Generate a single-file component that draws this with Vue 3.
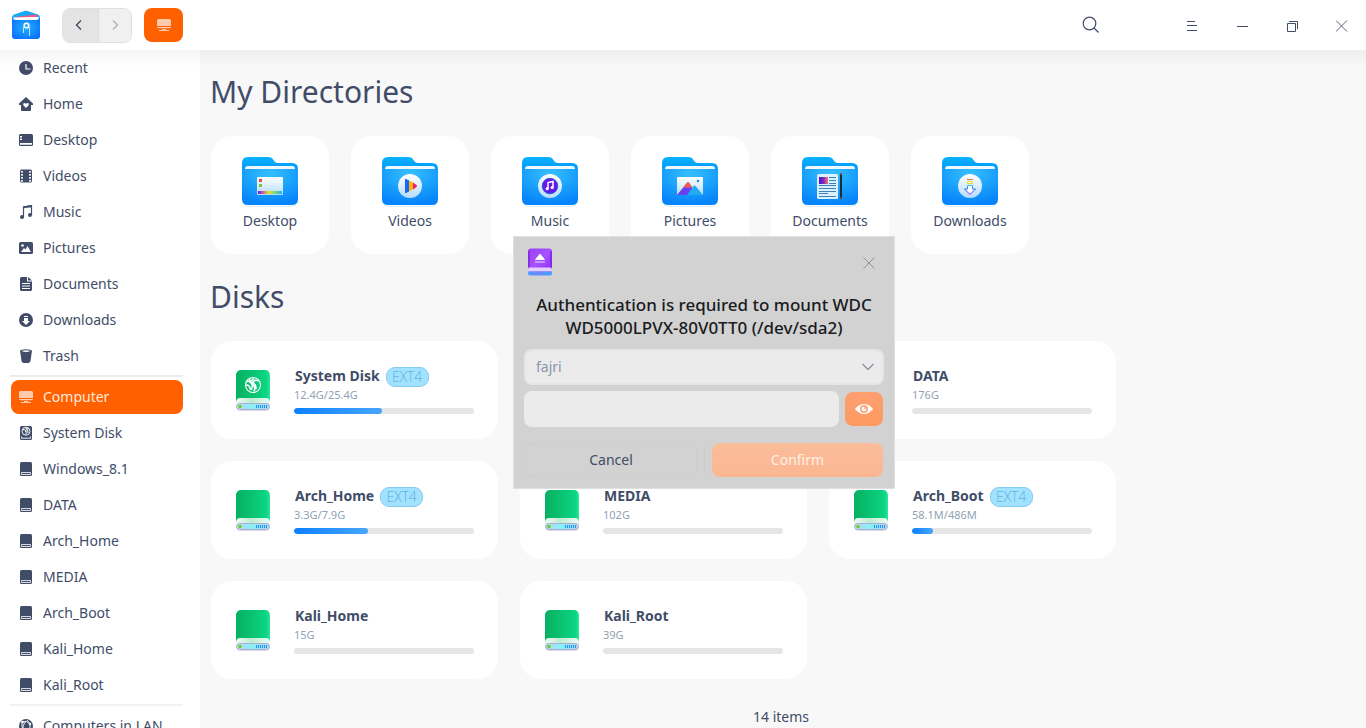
<script setup>
const places = [
  { name: 'Recent', icon: 'recent' },
  { name: 'Home', icon: 'home' },
  { name: 'Desktop', icon: 'desktop' },
  { name: 'Videos', icon: 'videos' },
  { name: 'Music', icon: 'music' },
  { name: 'Pictures', icon: 'pictures' },
  { name: 'Documents', icon: 'documents' },
  { name: 'Downloads', icon: 'downloads' },
  { name: 'Trash', icon: 'trash' },
]
const devices = [
  { name: 'Computer', icon: 'computer', active: true },
  { name: 'System Disk', icon: 'sysdisk' },
  { name: 'Windows_8.1', icon: 'disk' },
  { name: 'DATA', icon: 'disk' },
  { name: 'Arch_Home', icon: 'disk' },
  { name: 'MEDIA', icon: 'disk' },
  { name: 'Arch_Boot', icon: 'disk' },
  { name: 'Kali_Home', icon: 'disk' },
  { name: 'Kali_Root', icon: 'disk' },
]
const network = [{ name: 'Computers in LAN', icon: 'network' }]
const groups = [places, devices, network]

const directories = ['Desktop', 'Videos', 'Music', 'Pictures', 'Documents', 'Downloads']

const disks = [
  { name: 'System Disk', size: '12.4G/25.4G', used: 48.9, fs: 'EXT4', system: true },
  { name: 'Windows_8.1', size: '97.7G', used: 0 },
  { name: 'DATA', size: '176G', used: 0 },
  { name: 'Arch_Home', size: '3.3G/7.9G', used: 41.1, fs: 'EXT4' },
  { name: 'MEDIA', size: '102G', used: 0 },
  { name: 'Arch_Boot', size: '58.1M/486M', used: 11.7, fs: 'EXT4' },
  { name: 'Kali_Home', size: '15G', used: 0 },
  { name: 'Kali_Root', size: '39G', used: 0 },
]
</script>

<template>
  <svg class="defs" width="0" height="0" aria-hidden="true">
    <defs>
      <linearGradient id="tab" x1="0" y1="0" x2="0" y2="1">
        <stop offset="0" stop-color="#06b2ff" /><stop offset=".5" stop-color="#0789f4" />
      </linearGradient>
      <radialGradient id="front" cx=".5" cy=".12" r=".85">
        <stop offset="0" stop-color="#36bffd" /><stop offset=".5" stop-color="#1ca3fb" /><stop offset="1" stop-color="#0684fb" />
      </radialGradient>
      <radialGradient id="pocket" cx=".5" cy=".45" r=".65">
        <stop offset="0" stop-color="#22b4fb" /><stop offset="1" stop-color="#0a6cfb" />
      </radialGradient>
      <linearGradient id="paper" x1="0" y1="0" x2="0" y2="1">
        <stop offset="0" stop-color="#ffffff" /><stop offset="1" stop-color="#b5dcfb" />
      </linearGradient>
      <linearGradient id="rainbow">
        <stop offset="0" stop-color="#7b10e8" /><stop offset=".2" stop-color="#b45fb0" /><stop offset=".45" stop-color="#e8e420" />
        <stop offset=".65" stop-color="#8edb68" /><stop offset="1" stop-color="#18b6f5" />
      </linearGradient>
      <linearGradient id="arrow" x1="0" y1="0" x2="0" y2="1">
        <stop offset="0" stop-color="#2fc0e8" /><stop offset=".5" stop-color="#2463ef" /><stop offset="1" stop-color="#8b1ff0" />
      </linearGradient>
      <linearGradient id="green">
        <stop offset="0" stop-color="#05b064" /><stop offset=".2" stop-color="#08b867" /><stop offset=".9" stop-color="#0bd584" /><stop offset="1" stop-color="#2bea97" />
      </linearGradient>
      <linearGradient id="tray" x1="0" y1="0" x2="1" y2="0">
        <stop offset="0" stop-color="#c5cdf0" /><stop offset=".45" stop-color="#86f2f8" /><stop offset="1" stop-color="#bfcdf1" />
      </linearGradient>
      <linearGradient id="lip"><stop offset="0" stop-color="#f0faf4" /><stop offset=".45" stop-color="#bdebd2" /><stop offset="1" stop-color="#f0fbf5" /></linearGradient>
      <linearGradient id="purple" x1="0" y1="0" x2="1" y2="1"><stop offset="0" stop-color="#9b42f2" /><stop offset=".5" stop-color="#a652ff" /><stop offset="1" stop-color="#8b2bee" /></linearGradient>
      <linearGradient id="photo"><stop offset="0" stop-color="#4218d6" /><stop offset=".5" stop-color="#8324c9" /><stop offset="1" stop-color="#f37a64" /></linearGradient>
    </defs>
  </svg>

  <div class="window">
    <header class="titlebar">
      <svg class="app-icon" width="30" height="32" viewBox="0 0 30 32">
        <path d="M3 5.500 13.500 2q1.500-.6 3 0L27 5.500q2 1 2 3V14H1V8.500q0-2 2-3Z" fill="#18aaf6" />
        <path d="M4 8 25 5.500q1 0 1 1V11H4Z" fill="#f3547e" />
        <path d="M2.500 8.500 20 8l7.500 0v5h-25Z" fill="#fff" />
        <path d="M1 9q1 2 4 2h20q3 0 4-2v18q0 3-3 3H4q-3 0-3-3Z" fill="url(#pocket)" />
        <circle cx="15.500" cy="16.500" r="2.300" fill="none" stroke="#fff" stroke-width="1.600" />
        <path d="M12.500 18v6M18.500 18v9" stroke="#b9e2ff" stroke-width="1" />
      </svg>
      <div class="nav">
        <span class="back"><svg width="12" height="14" viewBox="0 0 12 14"><path d="M8 2.500 3.500 7l4.500 4.500" fill="none" stroke="#414d68" stroke-width="1.400" /></svg></span>
        <span class="forward"><svg width="12" height="14" viewBox="0 0 12 14"><path d="M4 2.500 8.500 7 4 11.500" fill="none" stroke="#b0b3b9" stroke-width="1.400" /></svg></span>
      </div>
      <div class="tab">
        <svg width="14" height="14" viewBox="0 0 14 14" fill="#ffc9ab"><path d="M1.500 1h11Q14 1 14 2.500V8H0V2.500Q0 1 1.500 1ZM0 9h14q0 1.300-1.300 1.300H1.300Q0 10.300 0 9ZM5 11h4v1H5ZM2 12h10v1H2Z" /></svg>
      </div>
      <svg class="search" width="18" height="18" viewBox="0 0 18 18" fill="none" stroke="#454d69" stroke-width="1.200"><circle cx="7.500" cy="7.500" r="6.300" /><path d="m12 12 4.500 4.500" /></svg>
      <div class="controls">
        <svg width="12" height="12" viewBox="0 0 12 12"><path d="M1 1.500h8M1 5.500h10M1 10.500h10" stroke="#414d68" /></svg>
        <svg width="12" height="12" viewBox="0 0 12 12"><path d="M1 6.500h11" stroke="#414d68" /></svg>
        <svg width="12" height="12" viewBox="0 0 12 12" fill="none" stroke="#414d68"><path d="M1.500 3.500h8v8h-8Z" /><path d="M3 1.500h8.500V9" /></svg>
        <svg width="12" height="12" viewBox="0 0 12 12"><path d="m0 .500 11 11m0-11-11 11" stroke="#414d68" stroke-width=".9" /></svg>
      </div>
    </header>

    <div class="body">
      <nav class="sidebar">
        <div v-for="(group, gi) in groups" :key="gi" class="group">
          <div v-for="item in group" :key="item.name" class="item" :class="{ active: item.active }">
            <svg width="14" height="14" viewBox="0 0 14 14" fill="currentColor">
              <template v-if="item.icon === 'recent'">
                <circle cx="7" cy="7" r="7" /><path d="M7 3v5h4.500" fill="none" stroke="#fff" stroke-width="1.200" />
              </template>
              <template v-else-if="item.icon === 'home'">
                <path d="m7 0 7 6.500V8h-2v5q0 1-1 1H3q-1 0-1-1V8H0V6.500Z" />
                <path d="M7 11 4.300 8.300Q3.700 6 5.500 6 6.500 6 7 7q.5-1 1.500-1 1.800 0 1.200 2.300Z" fill="#fff" />
              </template>
              <template v-else-if="item.icon === 'desktop'">
                <rect y="1" width="14" height="12" rx="1.500" /><path d="M1 10h12v1.800H1ZM1 3h2v1.500H1ZM1 5.500h2V7H1Z" fill="#fff" />
              </template>
              <template v-else-if="item.icon === 'videos'">
                <rect x="1" y=".5" width="12" height="13" rx="1.500" />
                <path d="M3 2v11M11 2v11" stroke="#fff" stroke-width="1.700" stroke-dasharray="1.700 1.300" />
              </template>
              <template v-else-if="item.icon === 'music'">
                <path d="M4.500 12V2l8-1.500V10" fill="none" stroke="currentColor" stroke-width="1.200" /><path d="M4 1.500 13 0v2.200L4 3.300Z" />
                <circle cx="3" cy="12" r="2" /><circle cx="11" cy="10" r="2" />
              </template>
              <template v-else-if="item.icon === 'pictures'">
                <rect y="1" width="14" height="12" rx="1.500" /><circle cx="3.500" cy="4.500" r="1.300" fill="#fff" />
                <path d="m2 11 3-4 1.500 1.500L8.500 5l3.500 6Z" fill="#fff" />
              </template>
              <template v-else-if="item.icon === 'documents'">
                <path d="M2.500 0H8v4.500h5v8q0 1.500-1.500 1.500h-9Q1 14 1 12.500v-11Q1 0 2.500 0ZM9 0l4 3.500H9Z" />
                <path d="M3 6.500h8M3 9h8M3 11.500h8" stroke="#fff" />
              </template>
              <template v-else-if="item.icon === 'downloads'">
                <circle cx="7" cy="7" r="7" /><path d="M5 3h4v1H5ZM5 5h4v3h2l-4 4-4-4h2Z" fill="#fff" />
              </template>
              <template v-else-if="item.icon === 'trash'">
                <path d="M1 1.500Q7-1 13 1.500L11.500 12Q11 14 9 14H5q-2 0-2.500-2Z" /><path d="M2.500 2q4.500-1.500 9 0-4.500 1.800-9 0Z" fill="#fff" />
              </template>
              <template v-else-if="item.icon === 'computer'">
                <path d="M1.500 1h11Q14 1 14 2.500V8H0V2.500Q0 1 1.500 1ZM0 9h14q0 1.300-1.300 1.300H1.300Q0 10.300 0 9ZM5 11h4v1H5ZM2 12h10v1H2Z" />
              </template>
              <template v-else-if="item.icon === 'sysdisk'">
                <rect x="1" width="12" height="14" rx="1.500" /><circle cx="7" cy="5.200" r="4" fill="none" stroke="#fff" stroke-width=".9" />
                <path d="M4 3.500q4 0 3 5M6 1.500q4 2 3 5.500M9.500 2.500Q6 3 7 6" fill="none" stroke="#fff" stroke-width="1" /><path d="M2.500 10.500v1.700h9v-1.700" fill="none" stroke="#fff" stroke-width=".9" />
              </template>
              <template v-else-if="item.icon === 'disk'">
                <rect x="1" width="12" height="14" rx="1.500" /><path d="M2.500 10.500v2h9v-2M2.500 10.500h9" fill="none" stroke="#fff" stroke-width=".8" />
              </template>
              <template v-else>
                <circle cx="7" cy="7" r="7" />
                <path d="M3 3q5-2 8 2M3 3q-1 5 2 9M7 2q-4 4-3 9M8 1q5 5 2 11" fill="none" stroke="#fff" stroke-width=".9" />
                <circle cx="3.500" cy="3" r="1.300" fill="#fff" /><circle cx="11" cy="5" r="1.200" fill="#fff" />
              </template>
            </svg>
            <span>{{ item.name }}</span>
          </div>
        </div>
      </nav>

      <main class="content">
        <h1>My Directories</h1>
        <section class="directories">
          <div v-for="dir in directories" :key="dir" class="dir">
            <svg width="58" height="52" viewBox="0 0 58 52">
              <path d="M7 1h20q4 0 5.500 3T37 7h14q6 0 6 6v30H1V7q0-6 6-6Z" fill="url(#tab)" />
              <path d="M7 10h44q3 0 3 3v6H4v-6q0-3 3-3Z" fill="#eef8ff" />
              <path d="M1 13h56v30q0 6-6 6H7q-6 0-6-6Z" fill="url(#front)" />
              <path d="M3 49.300q2 1.200 5 1.200h42q3 0 5-1.200" fill="none" stroke="#d7e2ef" stroke-width=".7" />
              <template v-if="dir === 'Desktop'">
                <rect x="16" y="21" width="26" height="18" rx="1" fill="url(#paper)" /><rect x="18" y="23" width="3" height="3" fill="#f0493e" />
                <rect x="18" y="28" width="3" height="3" fill="#7cc53d" /><rect x="17" y="35" width="24" height="3" fill="url(#rainbow)" />
              </template>
              <template v-else-if="dir === 'Videos'">
                <circle cx="29" cy="30" r="12" fill="url(#paper)" /><path d="M24 23.500q0-1 1-.6l3 1.600v11l-3 1.600q-1 .4-1-.6Z" fill="#1768f5" />
                <path d="m28 24.500 4 2v7l-4 2Z" fill="#fdb40c" /><path d="m32 26.500 3.500 2.500q1 1 0 2L32 33.500Z" fill="#f31d6d" />
              </template>
              <template v-else-if="dir === 'Music'">
                <circle cx="29" cy="30" r="12" fill="url(#paper)" /><circle cx="29" cy="30" r="7.800" fill="#6817f0" stroke="#1565b8" stroke-width=".8" />
                <path d="M27 32.500v-6l5-1v6" fill="none" stroke="#fff" stroke-width="1.500" /><circle cx="26.200" cy="32.700" r="1.600" fill="#fff" /><circle cx="31.200" cy="31.500" r="1.600" fill="#fff" />
              </template>
              <template v-else-if="dir === 'Pictures'">
                <rect x="16" y="21" width="26" height="18" rx="1" fill="url(#paper)" /><path d="m16 39 10-12q1-1 2 0l5 7-5 5Z" fill="#6a40f5" />
                <path d="m22 31.500 4-5q1-1 2 0l3.500 5Z" fill="#f15c4b" /><path d="m26 39 6.500-9q1-1 2 0L42 39Z" fill="#22abf3" /><circle cx="37" cy="25" r="1.200" fill="#1684ef" />
              </template>
              <template v-else-if="dir === 'Documents'">
                <rect x="16" y="18" width="21" height="25" rx="1.500" fill="#dceffc" /><rect x="18" y="21" width="9" height="7" fill="url(#photo)" />
                <path d="M28 21.500h7M28 24.500h7M28 27.500h7M18 29.500h17M18 32.500h17M18 35.500h17M18 37.500h9M18 40.500h17" stroke="#2676b8" stroke-width=".9" />
                <path d="M40 17v26" stroke="#222b32" stroke-width="2" /><path d="M40 17v2M40 41v1.500" stroke="#a9856d" />
              </template>
              <template v-else>
                <circle cx="29" cy="30" r="12" fill="url(#paper)" /><path d="M26 23.500h6" stroke="#e8704b" />
                <path d="M26.500 25.500h5v2h-5Z" fill="#fff" stroke="#ddda20" /><path d="M26.500 29.500h5V33h3L29 38.500 23.500 33h3Z" fill="#fff" stroke="url(#arrow)" />
              </template>
            </svg>
            <span>{{ dir }}</span>
          </div>
        </section>

        <h1 class="second">Disks</h1>
        <section class="disks">
          <div v-for="disk in disks" :key="disk.name" class="disk">
            <svg width="36" height="44" viewBox="0 0 36 44">
              <path d="M2 40.500q1 1 4 1h24q3 0 4-1" fill="none" stroke="#dedbe4" stroke-width="1" />
              <rect x="1" y="1" width="34" height="38" rx="5" fill="url(#green)" />
              <path d="M1 34q0-5 4-5h26q4 0 4 5v4H1Z" fill="url(#lip)" />
              <rect x="1.500" y="34.500" width="33" height="6" rx="3" fill="url(#tray)" stroke="#a9afd6" />
              <circle cx="5" cy="37.500" r="1.700" fill="#61d51d" /><path d="M21.500 36v3M23.500 36v3M25.500 36v3M27.500 36v3M29.500 36v3M31.500 36v3" stroke="#1597f4" />
              <template v-if="disk.system">
                <circle cx="18" cy="16" r="7.500" fill="none" stroke="#fff" stroke-width="1.100" />
                <path d="M11.500 12.500q4-1 5.500 2.500 1 3-1 6M11 16q4 0 4.500 5M15 9.500q-1 4 2.500 6t1.500 7M24 12q-6-2-5.500 2 3 2 2.500 6M19 9.500q-4 2-1 5" fill="none" stroke="#fff" stroke-width="1.500" />
              </template>
            </svg>
            <div class="info">
              <div class="name">{{ disk.name }}<span v-if="disk.fs" class="badge">{{ disk.fs }}</span></div>
              <div class="size">{{ disk.size }}</div>
              <div class="bar"><div class="fill" :style="{ width: disk.used + '%' }"></div></div>
            </div>
          </div>
        </section>
        <footer>14 items</footer>
      </main>
    </div>

    <div class="dialog">
      <div class="dialog-head">
        <svg width="26" height="30" viewBox="0 0 26 30">
          <rect x="1" y="1.500" width="24" height="25" rx="3" fill="url(#purple)" />
          <path d="M2 4v16M24 4v16" stroke="#7d24e2" stroke-width="1.500" />
          <path d="m13 7 4.500 5.500h-9ZM8 15h10" fill="#fff" stroke="#fff" stroke-width=".8" />
          <path d="M1 22.500q0-2 2-2h20q2 0 2 2v2H1Z" fill="#e7cdfb" />
          <rect x="1" y="24.500" width="24" height="4" rx="2" fill="#4b9dff" /><path d="M5 26.500h12" stroke="#9a6aff" stroke-width="2" stroke-dasharray="1 1" />
        </svg>
        <svg class="dismiss" width="12" height="12" viewBox="0 0 12 12"><path d="m.5.500 11 11m0-11-11 11" stroke="#858a99" stroke-width=".9" /></svg>
      </div>
      <div class="dialog-title"><div>Authentication is required to mount WDC</div><div>WD5000LPVX-80V0TT0 (/dev/sda2)</div></div>
      <div class="select">
        <span>fajri</span>
        <svg width="12" height="8" viewBox="0 0 12 8"><path d="m.5 1 5.500 5.500L11.500 1" fill="none" stroke="#858c9c" stroke-width="1.200" /></svg>
      </div>
      <div class="password">
        <div class="input"></div>
        <div class="eye">
          <svg width="18" height="12" viewBox="0 0 18 12"><path d="M0 6q4-5 9-5t9 5q-4 5-9 5T0 6Z" fill="#fff" /><circle cx="9" cy="6" r="3.200" fill="none" stroke="#fd9d6c" stroke-width="1.500" /><circle cx="10" cy="5" r="1" fill="#fd9d6c" /></svg>
        </div>
      </div>
      <div class="actions"><div class="cancel">Cancel</div><i></i><div class="confirm">Confirm</div></div>
    </div>
  </div>
</template>

<style>
html, body { margin: 0; overflow: hidden; }
</style>

<style scoped>
.defs { position: absolute; }
.window { position: relative; width: 1366px; height: 728px; overflow: hidden; display: flex; flex-direction: column; background: #f8f8f8; color: #414d68; font: 14px/20px "Noto Sans", sans-serif; box-sizing: border-box; }
.window * { box-sizing: border-box; }
svg { display: block; flex: none; }
.titlebar { height: 50px; flex: none; background: #fff; display: flex; align-items: center; }
.app-icon { margin-left: 11px; }
.nav { display: flex; width: 70px; height: 35px; margin-left: 21px; border: 1px solid #e0e0e0; border-radius: 8px; overflow: hidden; }
.nav span { flex: 1; display: flex; align-items: center; justify-content: center; }
.nav .back { background: #e4e4e4; border-right: 1px solid #dcdcdc; padding-right: 2px; }
.forward { background: #f0f0f0; }
.tab { width: 39px; height: 34px; margin-left: 12px; border-radius: 8px; background: #ff6000; display: flex; align-items: center; justify-content: center; }
.search { margin-left: auto; margin-right: 86px; }
.controls { display: flex; gap: 38px; margin-right: 18px; padding-top: 2px; }
.body { flex: 1; min-height: 0; display: flex; position: relative; }
.body::before { content: ""; position: absolute; inset: 0 0 auto 0; height: 18px; background: linear-gradient(rgba(0,0,0,.035), rgba(0,0,0,0)); }
.sidebar { width: 200px; flex: none; background: #fff; overflow: hidden; }
.group + .group { border-top: 2px solid #ececec; }
.group + .group { margin: 1px 17px 0 10px; padding-top: 2px; }
.group + .group .item { margin-left: 1px; margin-right: 0; }
.group + .group + .group { border-top-color: #f2f2f2; }
.item { height: 34px; margin: 1px 17px 2px 11px; padding-left: 8px; display: flex; align-items: center; gap: 10px; border-radius: 8px; white-space: nowrap; }
.item.active { background: #ff6000; color: #ffeadd; }
.item.active svg { color: #ffc9ab; }
.content { flex: 1; padding-left: 11px; display: flex; flex-direction: column; }
h1 { margin: 20px 0 0 -1px; height: 44px; font-size: 30px; line-height: 44px; font-weight: 400; }
.directories { display: flex; gap: 22px; margin-top: 22px; }
.dir { width: 118px; height: 118px; border-radius: 21px; background: #fff; display: flex; flex-direction: column; align-items: center; padding-top: 20px; }
.dir span { margin-top: 3px; }
h1.second { margin-top: 21px; }
.disks { display: grid; grid-template-columns: repeat(3, 287px); grid-auto-rows: 98px; gap: 22px; margin-top: 22px; }
.disk { background: #fff; border-radius: 21px; display: flex; padding: 28px 0 0 24px; }
.info { width: 180px; margin-left: 23px; margin-top: -3px; }
.name { height: 20px; display: flex; align-items: center; font-weight: 700; padding-left: 1px; white-space: nowrap; }
.badge { margin-left: 6px; margin-top: 2px; height: 20px; width: 43px; border: 1px solid #84cbf2; border-radius: 9px; background: #a3e2ff; color: #46a6da; font-weight: 200; line-height: 18px; text-align: center; }
.size { font-size: 11px; line-height: 16px; height: 16px; margin-top: 1px; color: #90a2b5; }
.bar { height: 6px; margin-top: 5px; border-radius: 3px; background: #e5e5e5; overflow: hidden; }
.fill { height: 6px; border-radius: 3px; background: linear-gradient(90deg, #0c81ff, #47a5ff); }
footer { margin-top: 28px; margin-left: -15px; text-align: center; }
.dialog { position: absolute; left: 513px; top: 236px; width: 382px; height: 253px; border: 1px solid #dfdfdf; background: #d2d2d2; padding: 10px 10px 0; }
.dialog-head { display: flex; justify-content: space-between; align-items: center; padding: 0 9px 0 3px; height: 30px; }
.dismiss { margin-top: 1px; }
.dialog-title { margin-top: 16px; text-align: center; color: #191b21; font-size: 17px; font-weight: 500; line-height: 23px; white-space: nowrap; }
.select { height: 36px; margin-top: 10px; border: 2px solid #e5e5e5; border-radius: 8px; background: #ebebeb; display: flex; align-items: center; justify-content: space-between; padding: 0 8px 0 10px; color: #8996aa; }
.password { margin-top: 6px; display: flex; gap: 6px; align-items: center; }
.input { width: 315px; height: 36px; border-radius: 8px; background: #ebebeb; }
.eye { width: 38px; height: 34px; border-radius: 8px; background: linear-gradient(#fd9f70, #fd9a60); display: flex; align-items: center; justify-content: center; }
.actions { margin-top: 16px; display: flex; align-items: center; }
.cancel, .confirm { height: 34px; border-radius: 8px; line-height: 34px; text-align: center; }
.cancel { width: 172px; margin-left: 1px; border: 1px solid #cecece; line-height: 32px; }
.actions i { width: 1px; height: 30px; margin: 0 7px; background: #cbcbcb; }
.confirm { width: 171px; background: linear-gradient(#fbbd9b, #fbb691); color: #fef0e8; }
</style>
